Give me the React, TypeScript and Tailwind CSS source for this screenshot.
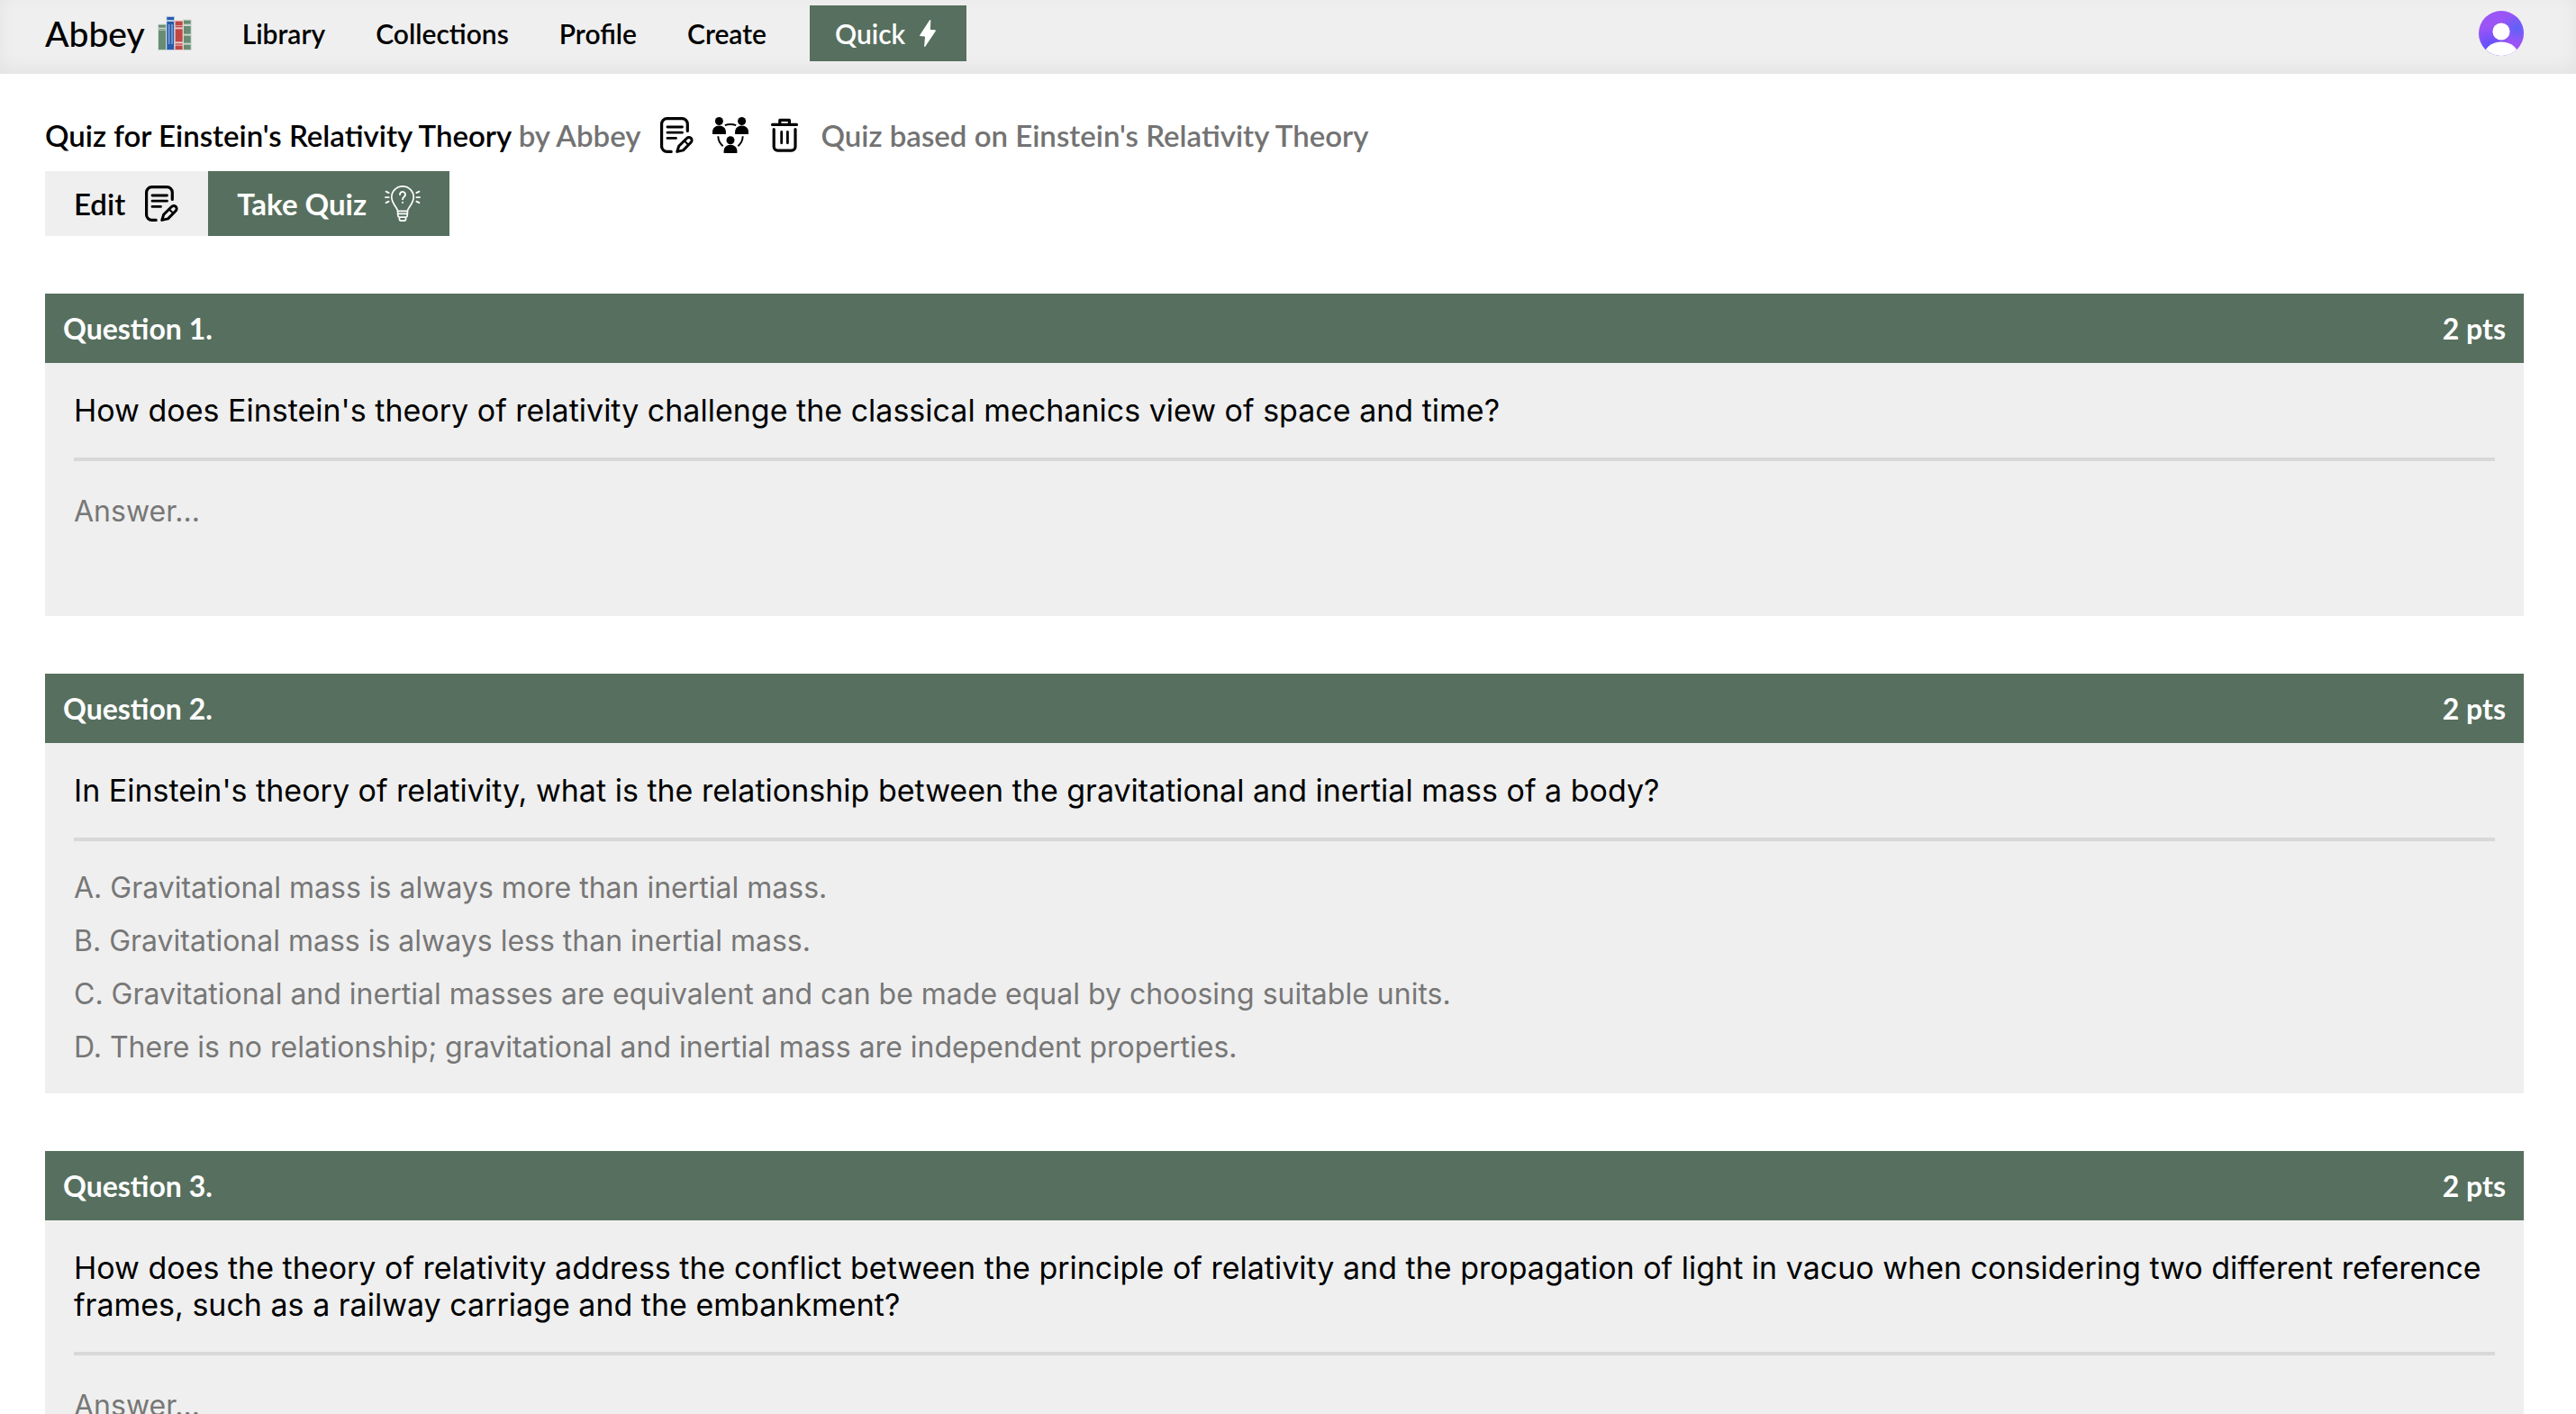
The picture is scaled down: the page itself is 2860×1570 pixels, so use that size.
import type { ReactNode } from "react";

function BooksLogo() {
  return (
    <svg viewBox="40 50 114 116" className="h-10 w-[38px]" aria-hidden="true">
      <g fill="#c9d6cd">
        <rect x="41" y="77" width="28" height="88" />
        <rect x="125" y="62" width="28" height="103" />
      </g>
      <rect x="69" y="51" width="28" height="114" fill="#b7c8e2" />
      <rect x="97" y="65" width="28" height="100" fill="#ecc9c7" />
      <g fill="#688c73">
        <rect x="43" y="80" width="24" height="9" />
        <rect x="43" y="94" width="24" height="3" />
        <rect x="43" y="99" width="24" height="63" />
        <rect x="127" y="65" width="23" height="12" />
        <rect x="127" y="84" width="23" height="26" />
        <rect x="127" y="116" width="23" height="24" />
        <rect x="127" y="146" width="23" height="16" />
      </g>
      <g fill="#265cab">
        <rect x="71" y="54" width="23" height="9" />
        <rect x="71" y="69" width="23" height="93" />
      </g>
      <g fill="#8fadd8">
        <rect x="76" y="78" width="4" height="66" />
        <rect x="86" y="78" width="4" height="66" />
      </g>
      <g fill="#c04744">
        <rect x="99" y="68" width="24" height="13" />
        <rect x="99" y="83" width="24" height="5" />
        <rect x="99" y="94" width="24" height="42" />
        <rect x="99" y="142" width="24" height="4" />
        <rect x="99" y="149" width="24" height="13" />
      </g>
    </svg>
  );
}

function BoltIcon() {
  return (
    <svg viewBox="0 0 30 30" className="size-[30px]" aria-hidden="true">
      <path
        d="M17.6 .8 6.8 17.4l6 .7-1 11.1L23.2 12l-6-.6z"
        fill="currentColor"
        stroke="currentColor"
        strokeWidth="1.4"
        strokeLinejoin="round"
      />
    </svg>
  );
}

function NoteEditIcon() {
  return (
    <svg
      viewBox="0 0 40 40"
      className="size-10"
      fill="none"
      stroke="currentColor"
      strokeWidth="3.2"
      strokeLinecap="round"
      strokeLinejoin="round"
      aria-hidden="true"
    >
      <path d="M32.3 15.5v-7.9a6 6 0 0 0-6-6H9.6a6 6 0 0 0-6 6v24.800a6 6 0 0 0 6 6h4.600" />
      <path d="M10 11h16.500M10 17.200h16.500M10 23.400h9.500" strokeWidth="2.800" />
      <path d="M20.800 38.400l1.900-6.200 8.800-8.700a3.200 3.200 0 0 1 4.700 4.500l-8.700 8.900z" strokeWidth="3" />
      <path d="M29 26.500l4.200 4.200" strokeWidth="2" />
    </svg>
  );
}

function ShareIcon() {
  return (
    <svg viewBox="0 0 40 40" className="size-10" fill="currentColor" aria-hidden="true">
      <circle cx="7.4" cy="4.5" r="4.5" />
      <path d="M0 19v-2.600C0 12.400 3 9.500 7.400 9.500s7.500 2.900 7.500 6.900V19z" />
      <circle cx="32.600" cy="4.500" r="4.500" />
      <path d="M25.100 19v-2.600c0-4 3.100-6.900 7.500-6.900S40 12.400 40 16.400V19z" />
      <circle cx="20" cy="25.800" r="4.500" />
      <path d="M12.600 40v-2.400c0-4 3-6.900 7.400-6.900s7.400 2.900 7.400 6.900V40z" />
      <g fill="none" stroke="currentColor" strokeWidth="1.900">
        <path d="M13.800 9.200q6.200-2.400 12.400 0" />
        <path d="M6.300 21.300q.2 6.800 5.400 10.900" />
        <path d="M33.700 21.300q-.2 6.800-5.400 10.900" />
      </g>
    </svg>
  );
}

function TrashIcon() {
  return (
    <svg
      viewBox="0 0 40 40"
      className="size-10"
      fill="none"
      stroke="currentColor"
      strokeWidth="3.2"
      strokeLinecap="round"
      strokeLinejoin="round"
      aria-hidden="true"
    >
      <path d="M6.500 8.400h27M14.800 7.500V3.400h10.600v4.100" />
      <path d="M8.200 13.500v19.400a4.200 4.200 0 0 0 4.200 4.200h15.400a4.200 4.200 0 0 0 4.200-4.200V13.500" />
      <path d="M16.700 16.500v12.300M23.400 16.500v12.300" strokeWidth="2.800" />
    </svg>
  );
}

function BulbIcon() {
  return (
    <svg
      viewBox="0 0 40 40"
      className="size-10"
      fill="none"
      stroke="currentColor"
      strokeWidth="1.700"
      strokeLinecap="round"
      strokeLinejoin="round"
      aria-hidden="true"
    >
      <path d="M14.600 31.400v-2.900c0-3.500-6.800-8.100-6.800-15.700a12.200 12 0 0 1 24.400 0c0 7.600-6.800 12.200-6.800 15.700v2.900z" />
      <path d="M14.600 28.400h10.800M14.800 31.800v1.800a1.500 1.500 0 0 0 1.500 1.500h7.400a1.500 1.500 0 0 0 1.500-1.500v-1.800M16.400 35.300v1.800a2 2 0 0 0 2 2h3.200a2 2 0 0 0 2-2v-1.800" />
      <path d="M17 10a3 3 0 1 1 4.700 2.400c-1.100.8-1.700 1.300-1.700 2.800M20 18.700v.2" strokeWidth="1.900" />
      <path
        d="M1.600 6.700l3 1.400M1 13.100h3.600M1.600 19.200l3-1.500M38.400 6.700l-3 1.400M39 13.100h-3.600M38.400 19.200l-3-1.500"
        strokeWidth="1.900"
      />
    </svg>
  );
}

function Avatar() {
  return (
    <svg viewBox="0 0 50 50" className="size-[50px]" aria-hidden="true">
      <defs>
        <clipPath id="avatar-clip">
          <circle cx="25" cy="25" r="25" />
        </clipPath>
        <radialGradient id="avatar-right" cx="0.84" cy="0.38" r="0.34">
          <stop offset="0" stopColor="#5b62f6" />
          <stop offset="1" stopColor="#5b62f6" stopOpacity="0" />
        </radialGradient>
        <radialGradient id="avatar-left" cx="0.25" cy="0.8" r="0.45">
          <stop offset="0" stopColor="#5b50fb" />
          <stop offset="1" stopColor="#5b50fb" stopOpacity="0" />
        </radialGradient>
      </defs>
      <g clipPath="url(#avatar-clip)">
        <rect width="50" height="50" fill="#9b54f6" />
        <rect width="50" height="50" fill="url(#avatar-right)" />
        <rect width="50" height="50" fill="url(#avatar-left)" />
        <circle cx="25" cy="23" r="9.600" fill="#fff" />
        <ellipse cx="25" cy="52" rx="20" ry="17.600" fill="#fff" />
      </g>
    </svg>
  );
}

const navItems = ["Library", "Collections", "Profile", "Create"];

function Header() {
  return (
    <header className="flex items-center bg-[#efefef] pt-1.5 pr-[58px] pb-3.5 pl-[50px] shadow-[inset_0_-6px_20px_rgba(0,0,0,0.05)]">
      <a href="#home" className="flex items-center gap-3.5 text-[39px] leading-[50px] font-medium">
        Abbey
        <BooksLogo />
      </a>
      <nav className="ml-14 flex items-center gap-14 text-[30px] leading-[34px] font-semibold">
        {navItems.map((item) => (
          <a key={item} href={"#" + item.toLowerCase()}>
            {item}
          </a>
        ))}
      </nav>
      <button
        type="button"
        className="ml-12 flex items-center gap-2.5 bg-[#576f5e] px-7 py-3.5 text-[30px] leading-[34px] font-semibold text-white"
      >
        Quick
        <BoltIcon />
      </button>
      <button type="button" aria-label="Account" className="ml-auto">
        <Avatar />
      </button>
    </header>
  );
}

function QuestionCard({
  number,
  question,
  children,
}: {
  number: number;
  question: string;
  children: ReactNode;
}) {
  return (
    <section className="bg-[#efefef]">
      <header className="flex justify-between bg-[#576f5e] p-5 text-[32px] leading-[37px] font-bold text-white">
        <h2>Question {number}.</h2>
        <span>2 pts</span>
      </header>
      <div className="p-8 font-['Inter',sans-serif]">
        <p className="text-[34px] leading-[41px]">{question}</p>
        <hr className="my-8 border-t-4 border-[#d8d8d8]" />
        {children}
      </div>
    </section>
  );
}

function AnswerBox({ label }: { label: string }) {
  return (
    <textarea
      aria-label={label}
      placeholder="Answer..."
      className="block h-[108px] w-full resize-none py-1 text-[32px] leading-[39px] outline-none placeholder:text-[#777777]"
    />
  );
}

const choices = [
  "A. Gravitational mass is always more than inertial mass.",
  "B. Gravitational mass is always less than inertial mass.",
  "C. Gravitational and inertial masses are equivalent and can be made equal by choosing suitable units.",
  "D. There is no relationship; gravitational and inertial mass are independent properties.",
];

export default function App() {
  return (
    <div className="min-h-screen bg-white font-['Lato',sans-serif] text-black">
      <Header />
      <main className="pt-12 pr-[58px] pb-16 pl-[50px]">
        <div className="flex items-center gap-5 text-[33px] leading-10 font-semibold">
          <h1>
            Quiz for Einstein's Relativity Theory{" "}
            <span className="text-[#737373]">by Abbey</span>
          </h1>
          <button type="button" aria-label="Edit quiz">
            <NoteEditIcon />
          </button>
          <button type="button" aria-label="Share quiz">
            <ShareIcon />
          </button>
          <button type="button" aria-label="Delete quiz">
            <TrashIcon />
          </button>
          <p className="text-[#737373]">Quiz based on Einstein's Relativity Theory</p>
        </div>

        <div className="mt-5 flex text-[33px] leading-10 font-semibold">
          <button type="button" className="flex items-center gap-5 bg-[#efefef] px-8 py-4">
            Edit
            <NoteEditIcon />
          </button>
          <button
            type="button"
            className="flex items-center gap-5 bg-[#576f5e] px-8 py-4 font-bold text-white"
          >
            Take Quiz
            <BulbIcon />
          </button>
        </div>

        <div className="mt-16 flex flex-col gap-16">
          <QuestionCard
            number={1}
            question="How does Einstein's theory of relativity challenge the classical mechanics view of space and time?"
          >
            <AnswerBox label="Answer to question 1" />
          </QuestionCard>
          <QuestionCard
            number={2}
            question="In Einstein's theory of relativity, what is the relationship between the gravitational and inertial mass of a body?"
          >
            <div className="flex flex-col items-start gap-5 text-[32px] leading-[39px] text-[#777777]">
              {choices.map((choice) => (
                <button key={choice} type="button" className="text-left">
                  {choice}
                </button>
              ))}
            </div>
          </QuestionCard>
          <QuestionCard
            number={3}
            question="How does the theory of relativity address the conflict between the principle of relativity and the propagation of light in vacuo when considering two different reference frames, such as a railway carriage and the embankment?"
          >
            <AnswerBox label="Answer to question 3" />
          </QuestionCard>
        </div>
      </main>
    </div>
  );
}
